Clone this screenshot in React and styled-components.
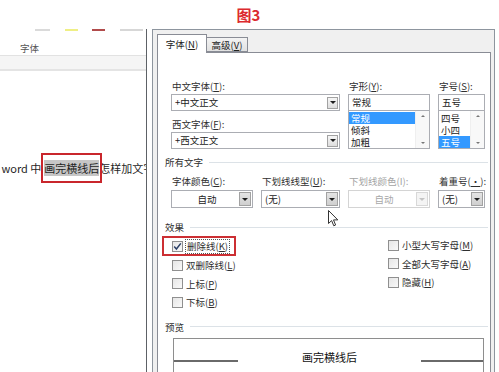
import React from 'react'
import styled, {createGlobalStyle} from 'styled-components'

const GlobalStyle = createGlobalStyle`
  html, body {
    margin: 0;
    padding: 0;
    background: #fff;
  }
  body {
    font-family: "Noto Sans CJK SC", "Noto Sans", sans-serif;
    color: #2a2a2a;
  }
`

const Page = styled.div`
  width: 499px;
  height: 372px;
  overflow: hidden;
  display: flex;
  flex-direction: column;
  background: #fff;
`

const Title = styled.div`
  height: 29px;
  display: flex;
  align-items: center;
  justify-content: center;
  padding-right: 2px;
  font-size: 15px;
  font-weight: 700;
  line-height: 1;
  color: #dc2a2e;
`

const Body = styled.div`
  flex: 1;
  display: flex;
  min-height: 0;
`

/* ---- word window behind the dialog ---- */

const WordPane = styled.div`
  width: 146px;
  flex: none;
  border-right: 1px solid #5d6166;
  display: flex;
  flex-direction: column;
  overflow: hidden;
`

const Marks = styled.div`
  height: 12px;
  display: flex;
  align-items: flex-start;
`

const Mark = styled.span`
  height: 2px;
  width: ${p => p.$w}px;
  margin-left: ${p => p.$gap}px;
  background: ${p => p.$color};
  opacity: 0.85;
`

const GroupLabel = styled.div`
  height: 14px;
  line-height: 14px;
  padding-left: 20px;
  font-size: 9.5px;
  color: #555;
`

const Ruler = styled.div`
  height: 13px;
  border-top: 1px solid #e2e2e2;
  border-bottom: 2px solid #e4e4e4;
  background: #f5f5f5;
`

const Doc = styled.div`
  padding-top: 82px;
`

const DocLine = styled.div`
  display: flex;
  align-items: center;
  white-space: pre;
  margin-left: -12px;
  font-size: 11px;
  color: #1f1f1f;
`

const RedBox = styled.span`
  border: 2px solid #c9262c;
  padding: 5px 1px;
  margin-right: -3px;
  position: relative;
  z-index: 1;
`

const Selected = styled.span`
  display: block;
  line-height: 16px;
  background: #c6c6c6;
`

/* ---- font dialog ---- */

const Dialog = styled.div`
  flex: 1;
  margin: 0 4px 0 5px;
  border: 1px solid #8d959e;
  border-bottom: none;
  background: #f0f0f0;
  padding: 4px 3px 0 4px;
  display: flex;
  flex-direction: column;
`

const Tabs = styled.div`
  height: 18px;
  display: flex;
  align-items: flex-end;
  position: relative;
  z-index: 1;
`

const Tab = styled.div`
  box-sizing: border-box;
  width: ${p => p.$w}px;
  height: ${p => (p.$active ? 19 : 15)}px;
  margin-bottom: ${p => (p.$active ? -1 : 0)}px;
  border: 1px solid #898c95;
  border-bottom: ${p => (p.$active ? 'none' : '1px solid #898c95')};
  border-left: ${p => (p.$active ? '1px solid #898c95' : 'none')};
  background: ${p => (p.$active ? '#fff' : 'linear-gradient(#f3f3f3, #e1e1e1)')};
  font-size: 9.5px;
  line-height: ${p => (p.$active ? 18 : 14)}px;
  text-align: center;
  color: #222;
`

const U = styled.span`
  text-decoration: underline;
`

const Panel = styled.div`
  flex: 1;
  position: relative;
  background: #fff;
  border: 1px solid #898c95;
  border-bottom: none;
  padding: 26px 2px 0 7px;
  display: flex;
  flex-direction: column;
`

const Grid = styled.div`
  display: grid;
  grid-template-columns: ${p => p.$cols};
  column-gap: 8px;
  margin-left: 6px;
  margin-top: ${p => p.$top || 0}px;
`

const Col = styled.div`
  display: flex;
  flex-direction: column;
`

const Label = styled.div`
  height: 14px;
  line-height: 14px;
  font-size: 9.5px;
  padding-left: 1px;
  white-space: nowrap;
  color: ${p => (p.$disabled ? '#a3a3a3' : '#2e2e2e')};
  margin-top: ${p => p.$top || 0}px;
`

const Box = styled.div`
  box-sizing: border-box;
  height: ${p => p.$h || 17}px;
  margin-top: ${p => p.$top || 1}px;
  border: 1px solid ${p => (p.$disabled ? '#d4d4d4' : '#abadb3')};
  background: #fff;
  display: flex;
  align-items: center;
  font-size: 9.5px;
  color: ${p => (p.$disabled ? '#a8a8a8' : '#222')};
  white-space: nowrap;
`

const BoxText = styled.span`
  flex: 1;
  padding-left: 3px;
  line-height: 13px;
  text-align: ${p => (p.$center ? 'center' : 'left')};
`

const Arrow = styled.span`
  box-sizing: border-box;
  width: ${p => p.$w || 11}px;
  height: ${p => p.$h || 11}px;
  margin-right: 1px;
  border: 1px solid ${p => (p.$disabled ? '#d8d8d8' : '#a2a2a2')};
  background: ${p =>
    p.$disabled
      ? '#f4f4f4'
      : p.$dark
        ? 'linear-gradient(#e4e4e4, #cfcfcf)'
        : 'linear-gradient(#f6f6f6, #dedede)'};
  display: flex;
  align-items: center;
  justify-content: center;

  &::after {
    content: '';
    border-left: 3px solid transparent;
    border-right: 3px solid transparent;
    border-top: 3px solid ${p => (p.$disabled ? '#c4c4c4' : '#1e1e1e')};
  }
`

const List = styled.div`
  box-sizing: border-box;
  height: 38px;
  border: 1px solid #abadb3;
  border-top: none;
  display: flex;
  background: #fff;
  overflow: hidden;
`

const Items = styled.div`
  flex: 1;
  padding-top: 1px;
`

const Item = styled.div`
  height: 12px;
  line-height: 12px;
  font-size: 9.5px;
  padding-left: 2px;
  overflow: hidden;
  background: ${p => (p.$on ? '#3399ff' : 'transparent')};
  color: ${p => (p.$on ? '#fff' : '#222')};
`

const Scroll = styled.div`
  width: 13px;
  background: #f8f8f8;
  border-left: 1px solid #efefef;
  display: flex;
  flex-direction: column;
  justify-content: space-between;
  align-items: center;
  padding: 4px 0;
`

const Tri = styled.span`
  border-left: 2.5px solid transparent;
  border-right: 2.5px solid transparent;
  ${p => (p.$up ? 'border-bottom' : 'border-top')}: 2.5px solid #777;
`

const Section = styled.div`
  display: flex;
  align-items: center;
  height: 14px;
  margin-top: ${p => p.$top}px;
  font-size: 9.5px;
  color: #2e2e2e;

  &::after {
    content: '';
    flex: 1;
    height: 1px;
    margin-left: 6px;
    background: #dce2e7;
  }
`

const Effects = styled.div`
  display: grid;
  grid-template-columns: 216px 1fr;
  margin-left: 6px;
  margin-top: 2px;
`

const Check = styled.div`
  box-sizing: border-box;
  height: ${p => p.$h || 18.5}px;
  display: flex;
  align-items: center;
  font-size: 9.5px;
  color: #2e2e2e;
  white-space: nowrap;
`

const Marked = styled(Check)`
  width: 74px;
  height: 20px;
  margin-left: -9px;
  padding-left: 7px;
  border: 2px solid #cc2f33;
`

const Tick = styled.span`
  box-sizing: border-box;
  width: 11px;
  height: 11px;
  margin: 0 3px 0 1px;
  border: 1px solid #8f8f8f;
  background: linear-gradient(135deg, #e6e6e6, #f9f9f9);
  display: flex;
  align-items: center;
  justify-content: center;
`

const Focus = styled.span`
  outline: 1px dotted #555;
  outline-offset: 0;
  padding: 0 1px;
  line-height: 13px;
`

const Preview = styled.div`
  box-sizing: border-box;
  height: 40px;
  margin: 4px 4px 0 8px;
  border: 1px solid #8e8e8e;
  border-bottom: none;
  padding-top: 11px;
`

const PreviewRow = styled.div`
  display: flex;
  align-items: flex-end;
  height: 14px;
`

const Rule = styled.span`
  width: ${p => p.$w}px;
  height: 2px;
  margin-bottom: 2px;
  background: #6a6a6a;
`

const PreviewText = styled.span`
  flex: 1;
  text-align: center;
  font-size: 11px;
  line-height: 14px;
  color: #111;
`

const Cursor = styled.svg`
  position: absolute;
  left: 170px;
  top: 157px;
`

const marks = [
  {w: 15, gap: 35, color: '#d4d4d4'},
  {w: 13, gap: 15, color: '#ecec70'},
  {w: 13, gap: 14, color: '#a32c2c'},
  {w: 23, gap: 15, color: '#d0d0d0'},
]

const Dropdown = ({text, center, disabled, h = 17, arrow = {}}) => (
  <Box $h={h} $top={h > 17 ? 2 : 1} $disabled={disabled}>
    <BoxText $center={center}>{text}</BoxText>
    <Arrow $disabled={disabled} {...arrow} />
  </Box>
)

const CheckMark = () => (
  <svg width="9" height="9" viewBox="0 0 9 9">
    <path d="M1.2 4.6 L3.4 7 L7.8 1.4" fill="none" stroke="#2b3f66" strokeWidth="1.5" />
  </svg>
)

const Option = ({label, k, checked}) => (
  <Check>
    <Tick>{checked && <CheckMark />}</Tick>
    {label}(<U>{k}</U>)
  </Check>
)

const App = () => (
  <>
    <GlobalStyle />
    <Page>
      <Title>图3</Title>
      <Body>
        <WordPane>
          <Marks>
            {marks.map((m, i) => (
              <Mark key={`mark-${i}`} $w={m.w} $gap={m.gap} $color={m.color} />
            ))}
          </Marks>
          <GroupLabel>字体</GroupLabel>
          <Ruler />
          <Doc>
            <DocLine>
              {'文 word 中'}
              <RedBox>
                <Selected>画完横线后</Selected>
              </RedBox>
              怎样加文字
            </DocLine>
          </Doc>
        </WordPane>

        <Dialog>
          <Tabs>
            <Tab $active $w={50}>
              字体(<U>N</U>)
            </Tab>
            <Tab $w={41}>
              高级(<U>V</U>)
            </Tab>
          </Tabs>
          <Panel>
            <Grid $cols="169px 82px 47px">
              <Col>
                <Label>
                  中文字体(<U>T</U>):
                </Label>
                <Dropdown text="+中文正文" arrow={{$h: 12}} />
                <Label $top={6}>
                  西文字体(<U>F</U>):
                </Label>
                <Dropdown text="+西文正文" arrow={{$h: 12}} />
              </Col>
              <Col>
                <Label>
                  字形(<U>Y</U>):
                </Label>
                <Box>
                  <BoxText>常规</BoxText>
                </Box>
                <List>
                  <Items>
                    <Item $on>常规</Item>
                    <Item>倾斜</Item>
                    <Item>加粗</Item>
                  </Items>
                  <Scroll>
                    <Tri $up />
                    <Tri />
                  </Scroll>
                </List>
              </Col>
              <Col>
                <Label>
                  字号(<U>S</U>):
                </Label>
                <Box>
                  <BoxText>五号</BoxText>
                </Box>
                <List>
                  <Items>
                    <Item>四号</Item>
                    <Item>小四</Item>
                    <Item $on>五号</Item>
                  </Items>
                  <Scroll>
                    <Tri $up />
                    <Tri />
                  </Scroll>
                </List>
              </Col>
            </Grid>

            <Section $top={6}>所有文字</Section>
            <Grid $cols="82px 79px 82px 47px" $top={5}>
              <Col>
                <Label>
                  字体颜色(<U>C</U>):
                </Label>
                <Dropdown text="自动" center h={18} arrow={{$w: 12, $h: 14, $dark: true}} />
              </Col>
              <Col>
                <Label>
                  下划线线型(<U>U</U>):
                </Label>
                <Dropdown text="(无)" h={18} arrow={{$w: 12, $h: 14, $dark: true}} />
              </Col>
              <Col>
                <Label $disabled>下划线颜色(I):</Label>
                <Dropdown text="自动" center disabled h={18} arrow={{$w: 12, $h: 14}} />
              </Col>
              <Col>
                <Label>
                  着重号(<U>·</U>):
                </Label>
                <Dropdown text="(无)" h={18} arrow={{$w: 12, $h: 14, $dark: true}} />
              </Col>
            </Grid>

            <Section $top={12}>效果</Section>
            <Effects>
              <Col>
                <Marked>
                  <Tick>
                    <CheckMark />
                  </Tick>
                  <Focus>
                    删除线(<U>K</U>)
                  </Focus>
                </Marked>
                <Option label="双删除线" k="L" />
                <Option label="上标" k="P" />
                <Option label="下标" k="B" />
              </Col>
              <Col>
                <Option label="小型大写字母" k="M" />
                <Option label="全部大写字母" k="A" />
                <Option label="隐藏" k="H" />
              </Col>
            </Effects>

            <Section $top={8}>预览</Section>
            <Preview>
              <PreviewRow>
                <Rule $w={64} />
                <PreviewText>画完横线后</PreviewText>
                <Rule $w={62} />
              </PreviewRow>
            </Preview>

            <Cursor width="11" height="17" viewBox="0 0 11 17">
              <path
                d="M0.5 0.5 L0.5 13.5 L3.6 10.6 L5.8 15.8 L7.6 15 L5.5 9.9 L9.8 9.9 Z"
                fill="#fff"
                stroke="#333"
                strokeWidth="1"
                strokeLinejoin="round"
              />
            </Cursor>
          </Panel>
        </Dialog>
      </Body>
    </Page>
  </>
)

export default App
